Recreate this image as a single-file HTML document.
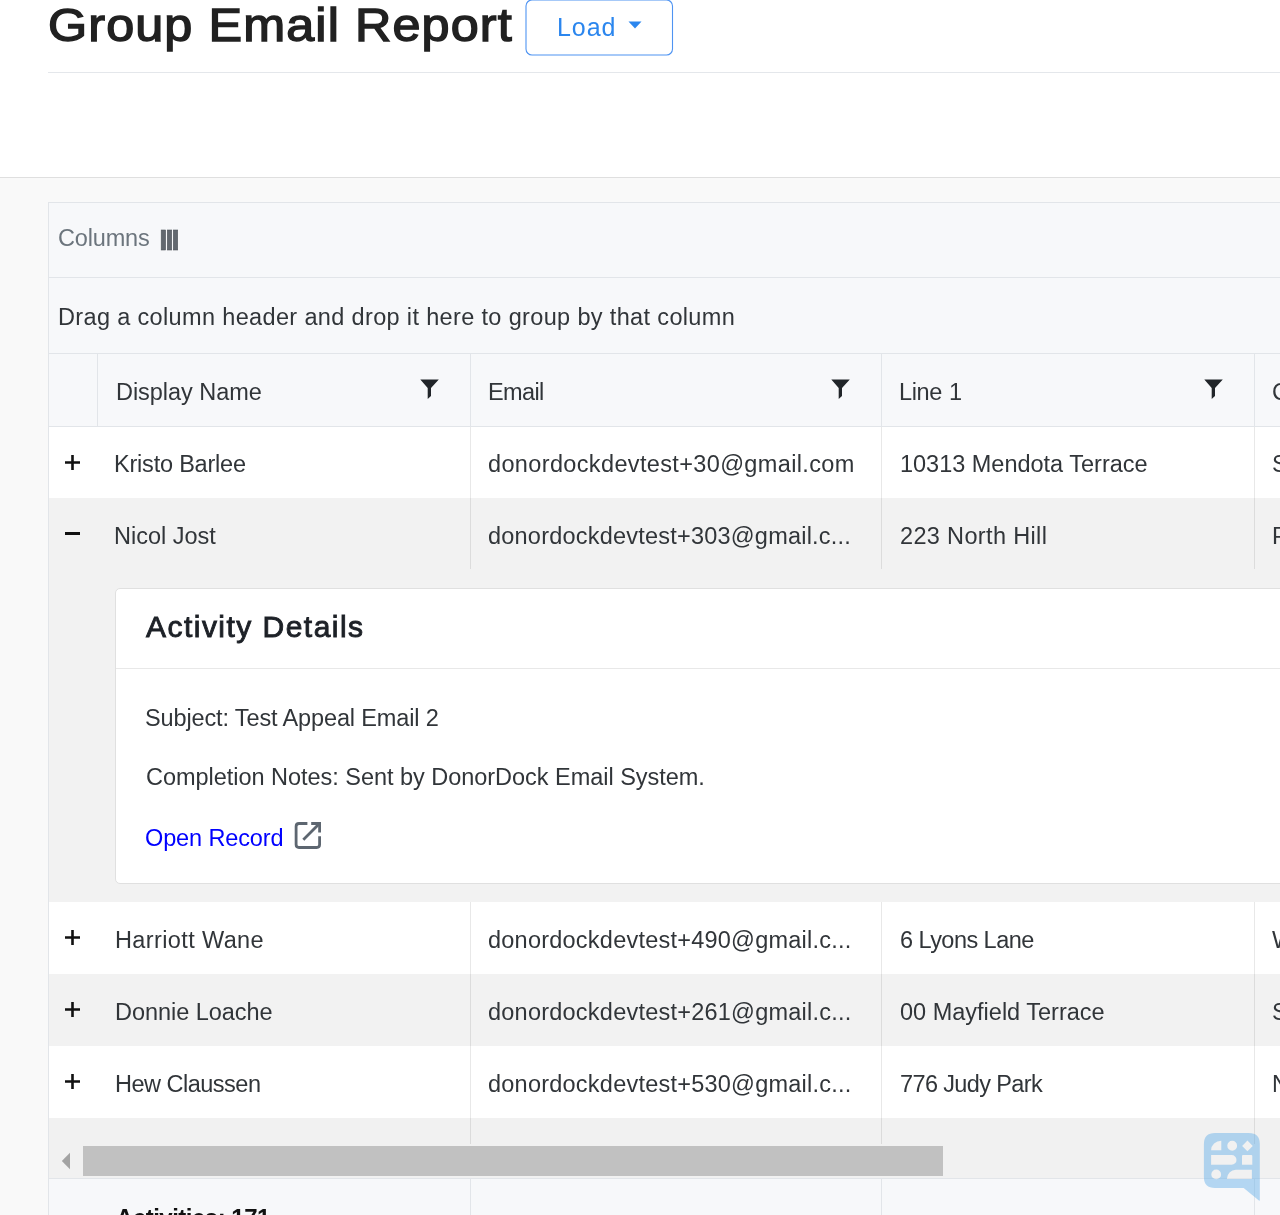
<!DOCTYPE html>
<html><head><meta charset="utf-8"><style>
*{box-sizing:border-box;margin:0;padding:0}
html,body{width:1280px;height:1215px;overflow:hidden;background:#fff;font-family:"Liberation Sans",sans-serif;color:#212529}
.t{position:absolute;white-space:nowrap;will-change:transform}
.a{position:absolute}
</style></head><body>
<svg class="a" style="left:520px;top:0" width="160" height="62"><rect x="6" y="0" width="146.5" height="55" rx="6" ry="6" fill="#fff" stroke="#4f94f2" stroke-width="1.1"/></svg>
<svg class="a" style="left:627px;top:20px" width="16" height="10"><path d="M1.5 1.5H14.5L8 8.5Z" fill="#2b86ee"/></svg>
<div class="a" style="left:48px;top:72px;width:1232px;height:1px;background:#e4e7eb"></div>
<div class="a" style="left:0;top:177px;width:1280px;height:1038px;background:#f9f9f9;border-top:1px solid #dfdfdf"></div>
<!-- grid -->
<div class="a" style="left:48px;top:202px;width:1240px;height:1020px;background:#f7f8fa;border:1px solid #e2e5e9"></div>
<div class="a" style="left:48px;top:277px;width:1232px;height:1px;background:#e2e5e9"></div>
<div class="a" style="left:48px;top:353px;width:1232px;height:1px;background:#e2e5e9"></div>
<div class="a" style="left:97px;top:353px;width:1px;height:74px;background:#e2e5e9"></div>
<div class="a" style="left:470px;top:353px;width:1px;height:74px;background:#e2e5e9"></div>
<div class="a" style="left:881px;top:353px;width:1px;height:74px;background:#e2e5e9"></div>
<div class="a" style="left:1254px;top:353px;width:1px;height:74px;background:#e2e5e9"></div>
<div class="a" style="left:48px;top:426px;width:1232px;height:1px;background:#e2e5e9"></div>
<!-- data area -->
<div class="a" style="left:49px;top:427px;width:1231px;height:71px;background:#fff"></div>
<div class="a" style="left:49px;top:498px;width:1231px;height:404px;background:#f2f2f2"></div>
<div class="a" style="left:49px;top:902px;width:1231px;height:72px;background:#fff"></div>
<div class="a" style="left:49px;top:974px;width:1231px;height:72px;background:#f2f2f2"></div>
<div class="a" style="left:49px;top:1046px;width:1231px;height:72px;background:#fff"></div>
<div class="a" style="left:49px;top:1118px;width:1231px;height:60px;background:#f1f1f1"></div>
<!-- col separators in rows -->
<div class="a" style="left:470px;top:427px;width:1px;height:142px;background:rgba(0,0,0,0.09)"></div>
<div class="a" style="left:881px;top:427px;width:1px;height:142px;background:rgba(0,0,0,0.09)"></div>
<div class="a" style="left:1254px;top:427px;width:1px;height:142px;background:rgba(0,0,0,0.09)"></div>
<div class="a" style="left:470px;top:902px;width:1px;height:242px;background:rgba(0,0,0,0.09)"></div>
<div class="a" style="left:881px;top:902px;width:1px;height:242px;background:rgba(0,0,0,0.09)"></div>
<div class="a" style="left:1254px;top:902px;width:1px;height:242px;background:rgba(0,0,0,0.09)"></div>
<!-- detail card -->
<div class="a" style="left:115px;top:588px;width:1180px;height:296px;background:#fff;border:1px solid #e0e0e0;border-radius:5px"></div>
<div class="a" style="left:116px;top:668px;width:1164px;height:1px;background:#e8e8e8"></div>
<!-- scrollbar -->
<div class="a" style="left:83px;top:1146px;width:860px;height:30px;background:#c1c1c1"></div>
<svg class="a" style="left:60px;top:1152px" width="12" height="18"><path d="M1.8 9L10 0.8V17.2Z" fill="#a3a3a3"/></svg>
<!-- footer -->
<div class="a" style="left:49px;top:1178px;width:1231px;height:1px;background:#e2e5e9"></div>
<div class="a" style="left:49px;top:1179px;width:1231px;height:40px;background:#f7f8fa"></div>
<div class="a" style="left:470px;top:1179px;width:1px;height:40px;background:#e2e5e9"></div>
<div class="a" style="left:881px;top:1179px;width:1px;height:40px;background:#e2e5e9"></div>
<div class="a" style="left:1254px;top:1179px;width:1px;height:40px;background:#e2e5e9"></div>
<!-- columns icon -->
<svg class="a" style="left:155px;top:222px" width="30" height="34">
<rect x="6.2" y="8" width="4.4" height="20" fill="#62686f" stroke="#50565c" stroke-width="0.6"/>
<rect x="12.3" y="8" width="4.4" height="20" fill="#62686f" stroke="#50565c" stroke-width="0.6"/>
<rect x="18.3" y="8" width="4.4" height="20" fill="#62686f" stroke="#50565c" stroke-width="0.6"/>
</svg>
<!-- filter icons -->
<svg class="a" style="left:420px;top:379px" width="20" height="21"><path d="M0.3 0.6H18.8L11 9V17L7.7 20V9Z" fill="#212529"/></svg>
<svg class="a" style="left:831px;top:379px" width="20" height="21"><path d="M0.3 0.6H18.8L11 9V17L7.7 20V9Z" fill="#212529"/></svg>
<svg class="a" style="left:1204px;top:379px" width="20" height="21"><path d="M0.3 0.6H18.8L11 9V17L7.7 20V9Z" fill="#212529"/></svg>
<!-- plus/minus -->
<svg class="a" style="left:64px;top:454px" width="17" height="17"><path d="M1 8.5H16M8.5 1V16" stroke="#111" stroke-width="2.6"/></svg>
<svg class="a" style="left:64px;top:525px" width="17" height="17"><path d="M1 8.5H16" stroke="#111" stroke-width="3"/></svg>
<svg class="a" style="left:64px;top:929px" width="17" height="17"><path d="M1 8.5H16M8.5 1V16" stroke="#111" stroke-width="2.6"/></svg>
<svg class="a" style="left:64px;top:1001px" width="17" height="17"><path d="M1 8.5H16M8.5 1V16" stroke="#111" stroke-width="2.6"/></svg>
<svg class="a" style="left:64px;top:1073px" width="17" height="17"><path d="M1 8.5H16M8.5 1V16" stroke="#111" stroke-width="2.6"/></svg>
<!-- open record icon -->
<svg class="a" style="left:288px;top:815px" width="40" height="40" fill="none" stroke="#5d6670" stroke-width="2.8" stroke-linecap="butt">
<path d="M19.4 8.5H11Q8.1 8.5 8.1 11.4V29.6Q8.1 32.5 11 32.5H28.7Q31.6 32.5 31.6 29.6V21.2"/>
<path d="M23.2 8.5H31.6V17.6"/>
<path d="M31 9.1L15.3 24.8"/>
</svg>
<!-- chat widget -->
<svg class="a" style="left:1200px;top:1129px" width="64" height="76">
<path fill="rgba(96,172,232,0.45)" fill-rule="evenodd" d="M15 3.9H48.8Q59.8 3.9 59.8 14.9V71Q59.8 72.2 58.9 71.4L43.7 58.9H15Q3.9 58.9 3.9 47.9V14.9Q3.9 3.9 15 3.9Z
M11.1 21.3A10.2 9.5 0 0 1 21.3 11.8V21.3Z
M37.1 16.75A4.9 4.9 0 1 0 27.3 16.75A4.9 4.9 0 1 0 37.1 16.75Z
M47.45 11.6L52.75 16.9L47.45 22.2L42.15 16.9Z
M11.1 26H31.6A4.9 4.9 0 0 1 31.6 35.8H11.1Z
M43 26H51.3Q52.3 26 52.3 27V35.8H42V27Q42 26 43 26Z
M21.1 45.4A4.9 4.9 0 1 0 11.3 45.4A4.9 4.9 0 1 0 21.1 45.4Z
M26.9 50V49.8A9 9 0 0 1 35.9 40.8H51.9V50Z"/>
</svg>
<div class="t" style="left:47.50px;top:-4.00px;font-size:46px;line-height:58px;font-weight:normal;letter-spacing:1.000px;color:#212121;-webkit-text-stroke:1.4px #212121;transform:scaleX(1.0948);transform-origin:0 0">Group Email Report</div>
<div class="t" style="left:556.50px;top:12.00px;font-size:25px;line-height:31px;font-weight:normal;letter-spacing:0.917px;color:#2b86ee">Load</div>
<div class="t" style="left:57.50px;top:224.00px;font-size:23.5px;line-height:29px;font-weight:normal;letter-spacing:-0.167px;color:#6c757d">Columns</div>
<div class="t" style="left:57.50px;top:303.00px;font-size:23.5px;line-height:29px;font-weight:normal;letter-spacing:0.350px;color:#313539">Drag a column header and drop it here to group by that column</div>
<div class="t" style="left:115.50px;top:378.00px;font-size:23.5px;line-height:29px;font-weight:normal;letter-spacing:-0.045px;color:#313539">Display Name</div>
<div class="t" style="left:488.30px;top:378.00px;font-size:23.5px;line-height:29px;font-weight:normal;letter-spacing:-0.625px;color:#313539">Email</div>
<div class="t" style="left:898.70px;top:378.00px;font-size:23.5px;line-height:29px;font-weight:normal;letter-spacing:-0.333px;color:#313539">Line</div>
<div class="t" style="left:949.30px;top:378.00px;font-size:23.5px;line-height:29px;font-weight:normal;letter-spacing:0.000px;color:#313539">1</div>
<div class="t" style="left:114.10px;top:450.00px;font-size:23.5px;line-height:29px;font-weight:normal;letter-spacing:-0.208px;color:#313539">Kristo Barlee</div>
<div class="t" style="left:488.30px;top:450.00px;font-size:23.5px;line-height:29px;font-weight:normal;letter-spacing:0.357px;color:#313539">donordockdevtest+30@gmail.com</div>
<div class="t" style="left:899.90px;top:450.00px;font-size:23.5px;line-height:29px;font-weight:normal;letter-spacing:-0.012px;color:#313539">10313 Mendota Terrace</div>
<div class="t" style="left:114.10px;top:522.00px;font-size:23.5px;line-height:29px;font-weight:normal;letter-spacing:0.000px;color:#313539">Nicol Jost</div>
<div class="t" style="left:488.30px;top:522.00px;font-size:23.5px;line-height:29px;font-weight:normal;letter-spacing:0.217px;color:#313539">donordockdevtest+303@gmail.c...</div>
<div class="t" style="left:900.30px;top:522.00px;font-size:23.5px;line-height:29px;font-weight:normal;letter-spacing:0.346px;color:#313539">223 North Hill</div>
<div class="t" style="left:145.90px;top:608.00px;font-size:30px;line-height:38px;font-weight:normal;letter-spacing:1.467px;color:#1d2127;-webkit-text-stroke:0.9px #1d2127">Activity Details</div>
<div class="t" style="left:144.70px;top:704.00px;font-size:23.5px;line-height:29px;font-weight:normal;letter-spacing:-0.130px;color:#313539">Subject: Test Appeal Email 2</div>
<div class="t" style="left:145.70px;top:763.00px;font-size:23.5px;line-height:29px;font-weight:normal;letter-spacing:-0.031px;color:#313539">Completion Notes: Sent by DonorDock Email System.</div>
<div class="t" style="left:145.00px;top:824.00px;font-size:23.5px;line-height:29px;font-weight:normal;letter-spacing:-0.125px;color:#0000ff">Open Record</div>
<div class="t" style="left:114.90px;top:926.00px;font-size:23.5px;line-height:29px;font-weight:normal;letter-spacing:0.375px;color:#313539">Harriott Wane</div>
<div class="t" style="left:488.30px;top:926.00px;font-size:23.5px;line-height:29px;font-weight:normal;letter-spacing:0.233px;color:#313539">donordockdevtest+490@gmail.c...</div>
<div class="t" style="left:899.50px;top:926.00px;font-size:23.5px;line-height:29px;font-weight:normal;letter-spacing:-0.545px;color:#313539">6 Lyons Lane</div>
<div class="t" style="left:114.90px;top:998.00px;font-size:23.5px;line-height:29px;font-weight:normal;letter-spacing:-0.042px;color:#313539">Donnie Loache</div>
<div class="t" style="left:488.30px;top:998.00px;font-size:23.5px;line-height:29px;font-weight:normal;letter-spacing:0.233px;color:#313539">donordockdevtest+261@gmail.c...</div>
<div class="t" style="left:899.50px;top:998.00px;font-size:23.5px;line-height:29px;font-weight:normal;letter-spacing:0.000px;color:#313539">00 Mayfield Terrace</div>
<div class="t" style="left:114.90px;top:1070.00px;font-size:23.5px;line-height:29px;font-weight:normal;letter-spacing:-0.500px;color:#313539">Hew Claussen</div>
<div class="t" style="left:488.30px;top:1070.00px;font-size:23.5px;line-height:29px;font-weight:normal;letter-spacing:0.233px;color:#313539">donordockdevtest+530@gmail.c...</div>
<div class="t" style="left:899.50px;top:1070.00px;font-size:23.5px;line-height:29px;font-weight:normal;letter-spacing:-0.625px;color:#313539">776 Judy Park</div>
<div class="t" style="left:115.50px;top:1203.00px;font-size:24px;line-height:30px;font-weight:bold;letter-spacing:-0.500px;color:#111111">Activities: 171</div>
<div class="t" style="left:1272.20px;top:378.00px;font-size:23.5px;line-height:29px;color:#313539">City</div>
<div class="t" style="left:1272.20px;top:450.00px;font-size:23.5px;line-height:29px;color:#313539">Seattle</div>
<div class="t" style="left:1272.20px;top:522.00px;font-size:23.5px;line-height:29px;color:#313539">Portland</div>
<div class="t" style="left:1272.20px;top:926.00px;font-size:23.5px;line-height:29px;color:#313539">Washington</div>
<div class="t" style="left:1272.20px;top:998.00px;font-size:23.5px;line-height:29px;color:#313539">San Jose</div>
<div class="t" style="left:1272.20px;top:1070.00px;font-size:23.5px;line-height:29px;color:#313539">New York</div></body></html>
